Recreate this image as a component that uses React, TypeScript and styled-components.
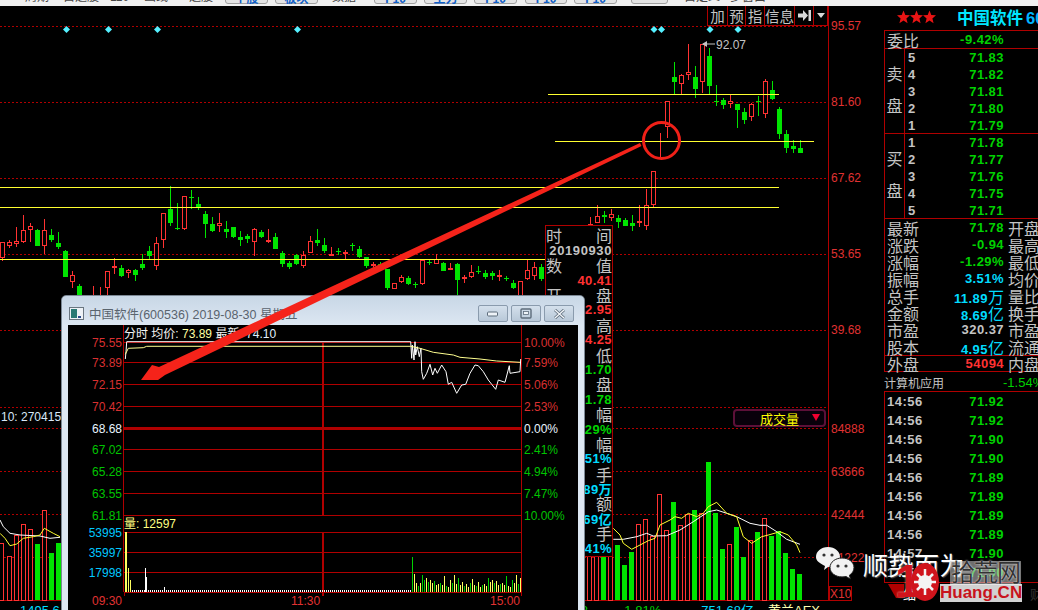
import React from "react";
import styled, { createGlobalStyle } from "styled-components";

const GlobalStyle = createGlobalStyle`
  html, body {
    margin: 0;
    padding: 0;
    background: #000;
    overflow: hidden;
  }
`;

const CJK = `"Liberation Sans", "Noto Sans CJK SC", sans-serif`;
const RED = "#e03232";
const LINE = "#b00000";
const GREEN = "#00d200";
const CYAN = "#00dcff";
const GREY = "#c4c4c4";

const Page = styled.div`
  position: relative;
  width: 1038px;
  height: 610px;
  overflow: hidden;
  display: flex;
  flex-direction: column;
  background: #000;
  font-family: ${CJK};
`;

const TopBar = styled.div`
  height: 6px;
  padding-bottom: 2px;
  box-sizing: border-box;
  flex: none;
  display: flex;
  align-items: flex-end;
  overflow: hidden;
  background: #f0f0f0;
`;

const ToolText = styled.span<{ $left: number; $w: number }>`
  flex: none;
  width: ${(p) => p.$w}px;
  margin-left: ${(p) => p.$left}px;
  font-size: 12px;
  line-height: 14px;
  color: #444;
  white-space: nowrap;
`;

const ToolButton = styled.span<{ $left: number; $w: number }>`
  flex: none;
  box-sizing: border-box;
  width: ${(p) => p.$w}px;
  height: 18px;
  margin-left: ${(p) => p.$left}px;
  border: 1px solid #a0a0a0;
  border-radius: 3px;
  background: #e4e4e4;
  color: #1060c8;
  font-size: 12px;
  font-weight: bold;
  line-height: 24px;
  text-align: center;
`;

const Workspace = styled.div`
  flex: 1;
  min-height: 0;
  display: flex;
`;

const ChartColumn = styled.div`
  flex: none;
  width: 884px;
  display: flex;
  flex-direction: column;
`;

const ChartPane = styled.div`
  position: relative;
  height: 595px;
  flex: none;
`;

const ChartSvg = styled.svg`
  display: block;
  width: 100%;
  height: 100%;
`;

const AxisText = styled.text<{ $fill: string; $bold?: boolean }>`
  font-family: ${CJK};
  font-size: 12px;
  font-weight: ${(p) => (p.$bold ? "bold" : "normal")};
  fill: ${(p) => p.$fill};
`;

const ActionBar = styled.div`
  position: absolute;
  top: 0;
  left: 707px;
  height: 19px;
  display: flex;
  border-bottom: 1px solid ${LINE};
  background: #000;
`;

const ActionCell = styled.div<{ $w: number }>`
  box-sizing: border-box;
  width: ${(p) => p.$w}px;
  display: flex;
  align-items: center;
  justify-content: center;
  border-left: 1px solid ${LINE};
  color: ${GREY};
  font-size: 14.5px;
  white-space: nowrap;
  &:last-child {
    border-right: 1px solid ${LINE};
  }
`;

const VolumeSelect = styled.div`
  position: absolute;
  left: 733px;
  top: 403px;
  box-sizing: border-box;
  width: 93px;
  height: 18px;
  display: flex;
  align-items: center;
  justify-content: center;
  border: 2px solid #5c1038;
  border-radius: 4px;
  background: #08000a;
  color: #ffff00;
  font-size: 13px;
  &::after {
    content: "";
    position: absolute;
    right: 4px;
    top: 3px;
    border-left: 4px solid transparent;
    border-right: 4px solid transparent;
    border-top: 7px solid #f00030;
  }
`;

const MultipleBox = styled.div`
  position: absolute;
  left: 829px;
  top: 580px;
  box-sizing: border-box;
  width: 23px;
  height: 15px;
  border: 1px solid ${LINE};
  color: ${RED};
  font-size: 12px;
  line-height: 14px;
  text-align: center;
`;

const StatusStrip = styled.div`
  flex: 1;
  display: flex;
  overflow: hidden;
  font-size: 13px;
  line-height: 16px;
  padding-top: 2px;
`;

const StatusText = styled.span<{ $left: number; $color: string }>`
  flex: none;
  margin-left: ${(p) => p.$left}px;
  color: ${(p) => p.$color};
  white-space: nowrap;
`;

/* data card opened on the candle chart, sits under the small window */
const DataCard = styled.div`
  position: absolute;
  left: 545px;
  top: 225px;
  box-sizing: border-box;
  width: 68px;
  height: 332px;
  padding-top: 2px;
  display: flex;
  flex-direction: column;
  border: 1px solid ${LINE};
  background: #000;
  overflow: hidden;
`;

const CardRow = styled.div<{ $color?: string; $split?: boolean; $wide?: boolean }>`
  height: 14.9px;
  flex: none;
  display: flex;
  align-items: center;
  justify-content: ${(p) => (p.$split ? "space-between" : "flex-end")};
  color: ${(p) => p.$color || GREY};
  font-size: ${(p) => (p.$split ? 16 : 13)}px;
  font-weight: ${(p) => (p.$split ? "normal" : "bold")};
  letter-spacing: ${(p) => (p.$split ? 0 : p.$wide ? 0.6 : 0.4)}px;
  white-space: nowrap;
`;

const SidePanel = styled.div`
  flex: none;
  width: 154px;
  display: flex;
  flex-direction: column;
  overflow: hidden;
`;

const SideHeader = styled.div`
  height: 24px;
  flex: none;
  box-sizing: border-box;
  display: flex;
  align-items: center;
  padding: 0 0 2px 13px;
  white-space: nowrap;
`;

const Stars = styled.div`
  display: flex;
  width: 60px;
  flex: none;
`;

const StockName = styled.span`
  color: #00e6ff;
  font-size: 16.5px;
  font-weight: bold;
  em {
    font-style: normal;
    color: #00b4ff;
    margin-left: 3px;
  }
`;

const Book = styled.div`
  flex: none;
  border-top: 1px solid ${LINE};
  border-left: 1px solid ${LINE};
`;

const Row = styled.div<{ $h?: number; $boxed?: boolean }>`
  height: ${(p) => p.$h || 17}px;
  box-sizing: border-box;
  flex: none;
  display: flex;
  align-items: center;
  white-space: nowrap;
  border-top: ${(p) => (p.$boxed ? `1px solid ${LINE}` : "none")};
  border-bottom: ${(p) => (p.$boxed ? `1px solid ${LINE}` : "none")};
`;

const RatioRow = styled(Row)`
  border-bottom: 1px solid ${LINE};
`;

const RowLabel = styled.span`
  flex: none;
  box-sizing: border-box;
  width: 36px;
  padding-left: 2px;
  color: ${GREY};
  font-size: 16px;
`;

const RowValue = styled.span<{ $color: string; $w?: number }>`
  flex: none;
  width: ${(p) => p.$w || 83}px;
  text-align: right;
  color: ${(p) => p.$color};
  font-size: 13px;
  font-weight: bold;
  letter-spacing: 0.45px;
  small {
    font-size: 16px;
    font-weight: normal;
    letter-spacing: 0;
    color: ${(p) => p.$color};
  }
`;

const RowExtra = styled.span`
  flex: none;
  margin-left: 4px;
  color: ${GREY};
  font-size: 16px;
`;

const BookSide = styled.div`
  height: 85px;
  box-sizing: border-box;
  display: flex;
  border-bottom: 1px solid ${LINE};
`;

const BookTitle = styled.div`
  flex: none;
  box-sizing: border-box;
  width: 20px;
  padding-top: 18px;
  display: flex;
  flex-direction: column;
  gap: 16px;
  align-items: center;
  border-right: 1px solid ${LINE};
  color: ${GREY};
  font-size: 16px;
  line-height: 16px;
`;

const BookRows = styled.div`
  flex: 1;
`;

const LevelNo = styled.span`
  flex: none;
  box-sizing: border-box;
  width: 16px;
  padding-left: 3px;
  color: ${GREY};
  font-size: 13px;
  font-weight: bold;
`;

const Quotes = styled.div`
  flex: none;
  border-left: 1px solid ${LINE};
`;

const SectorRow = styled.div`
  height: 19px;
  flex: none;
  display: flex;
  align-items: center;
  padding-top: 1px;
  box-sizing: border-box;
  color: ${GREY};
  font-size: 12px;
  white-space: nowrap;
  span {
    width: 119px;
    flex: none;
  }
  b {
    font-weight: normal;
    font-size: 13px;
    color: ${GREEN};
  }
`;

const Ticks = styled.div`
  height: 192px;
  flex: none;
  box-sizing: border-box;
  margin-right: -4px;
  border: 1px solid ${LINE};
  overflow: hidden;
`;

const TickRow = styled.div`
  height: 19px;
  display: flex;
  align-items: center;
`;

const TickTime = styled.span`
  flex: none;
  box-sizing: border-box;
  width: 36px;
  padding-left: 2px;
  color: ${GREY};
  font-size: 13px;
  font-weight: bold;
  letter-spacing: 0.5px;
`;

const Tabs = styled.div`
  flex: 1;
  display: flex;
  align-items: flex-start;
  padding: 1px 0 0 4px;
  font-size: 13px;
`;

const TabMark = styled.div`
  flex: none;
  width: 16px;
  height: 14px;
  background: ${LINE};
  clip-path: polygon(0 0, 100% 0, 100% 100%, 50% 100%);
`;

const TabLabel = styled.span<{ $left: number; $color: string }>`
  flex: none;
  margin-left: ${(p) => p.$left}px;
  color: ${(p) => p.$color};
`;

/* floating day window */
const DayWindow = styled.div`
  position: absolute;
  left: 61px;
  top: 295px;
  box-sizing: border-box;
  width: 524px;
  height: 330px;
  padding: 0 6px 0 6px;
  display: flex;
  flex-direction: column;
  border: 1px solid #7c8894;
  border-radius: 5px 5px 0 0;
  background: linear-gradient(#c8d7e6, #dde7f2 30px);
`;

const WindowTitle = styled.div`
  height: 29px;
  flex: none;
  box-sizing: border-box;
  display: flex;
  align-items: center;
  gap: 5px;
  padding: 6px 4px 0 1px;
  color: #5a646e;
  font-size: 12.5px;
`;

const TitleText = styled.span`
  flex: 1;
  white-space: nowrap;
`;

const WindowButtons = styled.div`
  display: flex;
  gap: 3px;
`;

const WindowButton = styled.div`
  box-sizing: border-box;
  width: 30px;
  height: 17px;
  display: flex;
  align-items: center;
  justify-content: center;
  border: 1px solid #8a9bad;
  border-radius: 2px;
  background: linear-gradient(#d4e0ec, #b8c8d8);
`;

const DayChart = styled.svg`
  display: block;
  flex: none;
  width: 510px;
  height: 285px;
  background: #000;
`;

const Watermark = styled.div`
  position: absolute;
  left: 816px;
  top: 540px;
  width: 222px;
  height: 70px;
  pointer-events: none;
`;

const WaterTitle = styled.span`
  position: absolute;
  left: 47px;
  top: 6px;
  color: #fff;
  font-size: 25px;
  letter-spacing: 0.5px;
  white-space: nowrap;
  text-shadow: 1px 1px 1px #555;
`;

const WaterSite = styled.span`
  position: absolute;
  left: 134px;
  top: 21px;
  padding: 0 1px;
  background: rgba(200, 200, 200, 0.55);
  color: #333;
  font-size: 24px;
  line-height: 24px;
  letter-spacing: -1px;
  white-space: nowrap;
  text-shadow: 0 0 2px #fff;
`;

const WaterLogo = styled.svg`
  position: absolute;
  left: 94px;
  top: 22px;
`;

const WaterNumber = styled.span`
  position: absolute;
  left: 79px;
  top: 14px;
  color: #d0141c;
  font-size: 46px;
  font-weight: bold;
  line-height: 54px;
  text-shadow: 0 0 2px rgba(255, 255, 255, 0.7);
`;

const WaterDomain = styled.span`
  position: absolute;
  left: 124px;
  top: 44px;
  background: rgba(255, 255, 255, 0.82);
  color: #c8141c;
  font-size: 17px;
  font-weight: bold;
  line-height: 18px;
  white-space: nowrap;
`;

const Overlay = styled.svg`
  position: absolute;
  left: 0;
  top: 0;
  pointer-events: none;
`;

// [x, wickTop, bodyTop, bodyBottom, wickBottom, green?] read at 3x
type Candle = [number, number, number, number, number, number];
const candles: Candle[] = [
  [7, 725, 727, 773, 782, 0], [28, 720, 727, 737, 743, 0], [49, 682, 724, 730, 740, 0],
  [70, 645, 691, 725, 729, 0], [91, 670, 679, 688, 725, 0], [112, 688, 690, 737, 737, 1],
  [133, 658, 691, 736, 762, 0], [154, 687, 706, 720, 726, 1], [175, 697, 730, 741, 747, 1],
  [196, 750, 753, 830, 832, 1], [217, 813, 826, 844, 863, 0], [238, 853, 858, 895, 900, 1],
  [280, 858, 890, 900, 900, 0], [301, 860, 890, 900, 900, 0], [322, 814, 814, 862, 900, 0],
  [343, 775, 799, 803, 822, 0], [364, 796, 804, 828, 832, 1], [385, 806, 812, 818, 834, 0],
  [406, 808, 811, 824, 843, 1], [427, 762, 793, 805, 810, 1], [448, 739, 754, 767, 778, 1],
  [469, 712, 730, 796, 810, 0], [490, 640, 641, 718, 743, 0], [511, 558, 628, 668, 678, 1],
  [532, 609, 685, 688, 690, 1], [553, 589, 589, 686, 689, 0], [574, 570, 591, 594, 627, 1],
  [595, 591, 612, 624, 630, 1], [616, 633, 643, 671, 714, 1], [637, 652, 672, 693, 697, 1],
  [658, 640, 671, 675, 696, 0], [679, 663, 688, 695, 714, 1], [700, 680, 681, 711, 714, 1],
  [721, 694, 712, 720, 738, 1], [742, 702, 708, 717, 728, 1], [763, 685, 688, 725, 767, 0],
  [784, 690, 697, 710, 714, 1], [805, 687, 721, 725, 730, 0], [826, 700, 712, 746, 748, 1],
  [847, 754, 759, 792, 800, 1], [868, 783, 790, 802, 806, 1], [889, 763, 766, 792, 794, 1],
  [910, 754, 766, 797, 803, 0], [931, 708, 725, 758, 760, 0], [952, 687, 720, 729, 737, 1],
  [973, 714, 736, 752, 760, 1], [994, 741, 764, 767, 767, 0], [1015, 745, 754, 756, 764, 1],
  [1036, 750, 757, 760, 778, 0], [1057, 730, 736, 738, 752, 1], [1078, 739, 747, 770, 775, 1],
  [1099, 771, 772, 798, 803, 1], [1120, 786, 793, 797, 805, 0], [1141, 787, 793, 795, 810, 1],
  [1162, 808, 808, 863, 869, 1], [1183, 850, 851, 865, 865, 0], [1204, 826, 832, 845, 848, 0],
  [1225, 828, 834, 852, 855, 1], [1246, 845, 853, 855, 863, 1], [1267, 780, 781, 851, 855, 0],
  [1288, 780, 786, 790, 795, 1], [1309, 762, 779, 791, 792, 0], [1330, 786, 789, 812, 812, 1],
  [1351, 790, 804, 806, 810, 0], [1372, 790, 792, 840, 900, 1], [1393, 826, 833, 835, 849, 0],
  [1414, 796, 817, 830, 835, 0], [1435, 798, 813, 816, 822, 1], [1456, 810, 818, 830, 836, 1],
  [1477, 812, 818, 827, 840, 1], [1498, 811, 825, 827, 842, 0], [1519, 827, 833, 838, 843, 1],
  [1540, 840, 848, 864, 867, 1], [1561, 843, 845, 890, 900, 0],
  [1582, 780, 811, 835, 840, 0], [1603, 785, 801, 826, 840, 0], [1624, 793, 801, 837, 842, 1],
  [1771, 652, 672, 700, 700, 0], [1792, 616, 649, 668, 668, 0], [1813, 633, 646, 650, 668, 1],
  [1834, 628, 643, 653, 662, 0], [1855, 646, 654, 665, 684, 1], [1876, 655, 660, 677, 678, 1],
  [1897, 645, 670, 677, 692, 1], [1918, 616, 663, 667, 680, 0], [1939, 567, 616, 677, 689, 0],
  [1960, 514, 514, 614, 620, 0], [1981, 400, 437, 437, 475, 0], [2002, 304, 304, 379, 413, 0],
  [2023, 186, 232, 245, 283, 1], [2044, 222, 226, 251, 283, 0], [2065, 132, 217, 223, 240, 0],
  [2086, 198, 232, 266, 294, 1], [2107, 132, 132, 244, 278, 0], [2128, 145, 168, 257, 283, 1],
  [2149, 255, 303, 305, 318, 1], [2170, 295, 300, 315, 327, 1], [2191, 284, 304, 311, 323, 0],
  [2212, 312, 312, 329, 383, 1], [2233, 325, 336, 359, 372, 1], [2254, 310, 313, 349, 362, 0],
  [2275, 288, 303, 305, 347, 1], [2296, 238, 244, 341, 353, 0], [2317, 243, 270, 297, 299, 1],
  [2338, 322, 328, 401, 417, 1], [2359, 390, 403, 443, 458, 1], [2380, 420, 438, 446, 459, 1],
  [2401, 420, 444, 460, 460, 1],
];

// [x, top, green?] volume bars, px
const leftBars: [number, number, number][] = [
  [1, 543, 0], [9, 556, 0], [16, 535, 0], [23, 524, 0], [30, 529, 0], [37, 544, 1], [44, 510, 0], [51, 553, 1], [58, 543, 1],
];
const rightTops: [number, number][] = [
  [470, 0], [470, 0], [470, 1], [425, 0], [435, 1], [495, 1], [455, 1], [373, 0], [358, 0], [410, 0], [283, 0], [391, 0], [306, 1],
  [375, 0], [343, 0], [330, 1], [341, 0], [186, 1], [339, 1], [447, 1], [433, 0], [381, 1], [471, 1], [421, 0], [396, 1], [355, 0],
  [408, 1], [394, 1], [459, 1], [507, 1], [522, 1],
];

const priceGrid = [26, 102, 178, 254, 330, 407, 428, 471, 514, 557];
const axisLabels: [string, number][] = [
  ["95.57", 30], ["81.60", 106], ["67.62", 182], ["53.65", 258], ["39.68", 334],
  ["84888", 433], ["63666", 476], ["42444", 519], ["21222", 562],
];
const diamonds = [66.5, 108.5, 157.5, 297.5, 654, 661.5, 710, 738];
const yellowLines: [number, number, number][] = [
  [0, 779, 187.5], [0, 779, 207.5], [0, 560, 259.5], [548, 779, 94.5], [555, 814, 141.5],
];

const maWhiteLeft = "0,360 10,380 30,400 60,405 120,408 150,415 180,412";
const maYellowLeft = "0,400 15,415 30,437 50,432 70,415 100,410 120,405 133,385 160,400 180,410";
const maWhiteRight =
  "100,418 130,418 170,410 200,400 220,408 260,407 300,390 340,365 385,335 410,330 440,340 470,350 510,370 540,376 560,376 590,395 620,418 660,433";
const maYellowRight =
  "100,385 120,405 130,430 155,448 180,435 205,422 225,415 240,375 270,360 285,350 305,355 325,340 350,350 370,340 385,320 410,307 440,340 470,350 490,410 515,430 545,410 565,405 600,395 625,405 650,435 660,458";

const scaleLine = (pts: string, ox: number, oy: number) =>
  pts
    .split(" ")
    .map((p) => {
      const [x, y] = p.split(",").map(Number);
      return `${(ox + x / 3).toFixed(1)},${(oy + y / 3).toFixed(1)}`;
    })
    .join(" ");

const Candles = () => (
  <g shapeRendering="crispEdges">
    {candles.map(([x3, wt, bt, bb, wb, green]) => {
      const x = Math.round(x3 / 3) + 0.5;
      const color = green ? "#00e400" : "#ff3232";
      const top = bt / 3;
      const h = Math.max(bb / 3 - top, 1);
      return (
        <g key={x3}>
          <line x1={x} x2={x} y1={wt / 3} y2={wb / 3} stroke={color} />
          {bt === bb ? null : green ? (
            <rect x={x - 2.5} y={top} width={5} height={h} fill={color} />
          ) : (
            <rect x={x - 2} y={top} width={4} height={h} fill="#000" stroke={color} />
          )}
        </g>
      );
    })}
  </g>
);

const VolumeBars = () => (
  <g shapeRendering="crispEdges">
    {leftBars.map(([x, top, green]) =>
      green ? (
        <rect key={x} x={x - 2.5} y={top} width={5} height={600 - top} fill="#00e400" />
      ) : (
        <rect key={x} x={x - 2} y={top} width={4} height={600 - top} fill="#000" stroke="#ff3232" />
      )
    )}
    {rightTops.map(([z, green], i) => {
      const x = Math.round(580 + (28 + i * 21) / 3) + 0.5;
      const top = 400 + z / 3;
      return green ? (
        <rect key={i} x={x - 2.5} y={top} width={5} height={600 - top} fill="#00e400" />
      ) : (
        <rect key={i} x={x - 2} y={top} width={4} height={600 - top} fill="#000" stroke="#ff3232" />
      );
    })}
  </g>
);

const MainChart = () => (
  <ChartSvg viewBox="0 6 884 595">
    {priceGrid.map((y) => (
      <line key={y} x1={0} x2={828} y1={y + 0.5} y2={y + 0.5} stroke={LINE} strokeDasharray="1.5 2.5" shapeRendering="crispEdges" />
    ))}
    <line x1={828.5} x2={828.5} y1={6} y2={600} stroke={LINE} shapeRendering="crispEdges" />
    <line x1={0} x2={829} y1={600.5} y2={600.5} stroke={LINE} shapeRendering="crispEdges" />
    {axisLabels.map(([t, y]) => (
      <AxisText key={t} x={831} y={y} $fill={RED}>
        {t}
      </AxisText>
    ))}
    <Candles />
    {yellowLines.map(([a, b, y]) => (
      <line key={`${a}-${y}`} x1={a} x2={b} y1={y} y2={y} stroke="#ffff30" shapeRendering="crispEdges" />
    ))}
    {diamonds.map((x) => (
      <polygon key={x} points={`${x},26 ${x + 3.5},29.5 ${x},33 ${x - 3.5},29.5`} fill="#55f0ff" />
    ))}
    <path d="M703 44h12" stroke="#c4c4c4" />
    <path d="M702 44l5-3v6z" fill="#c4c4c4" />
    <AxisText x={716} y={48.5} $fill={GREY}>
      92.07
    </AxisText>
    <AxisText x={1} y={421} $fill="#d8e8f8">
      10: 2704150
    </AxisText>
    <VolumeBars />
    <polyline points={scaleLine(maWhiteLeft, 0, 400)} fill="none" stroke="#fff" />
    <polyline points={scaleLine(maYellowLeft, 0, 400)} fill="none" stroke="#ffff30" />
    <polyline points={scaleLine(maWhiteRight, 580, 400)} fill="none" stroke="#fff" />
    <polyline points={scaleLine(maYellowRight, 580, 400)} fill="none" stroke="#ffff30" />
  </ChartSvg>
);

const cardRows: { a: string; b?: string; color?: string; wide?: boolean }[] = [
  { a: "时", b: "间" },
  { a: "20190930", color: GREY, wide: true },
  { a: "数", b: "值" },
  { a: "40.41", color: "#ff3232" },
  { a: "开", b: "盘" },
  { a: "42.95", color: "#ff3232" },
  { a: "最", b: "高" },
  { a: "44.25", color: "#ff3232" },
  { a: "最", b: "低" },
  { a: "41.70", color: "#00d200" },
  { a: "收", b: "盘" },
  { a: "41.78", color: "#00d200" },
  { a: "涨", b: "幅" },
  { a: "3.29%", color: "#00d200" },
  { a: "振", b: "幅" },
  { a: "6.51%", color: CYAN },
  { a: "总", b: "手" },
  { a: "23.89万", color: CYAN },
  { a: "金", b: "额" },
  { a: "9.69亿", color: CYAN },
  { a: "换", b: "手" },
  { a: "4.41%", color: CYAN },
];

const sells = [
  ["5", "71.83"], ["4", "71.82"], ["3", "71.81"], ["2", "71.80"], ["1", "71.79"],
];
const buys = [
  ["1", "71.78"], ["2", "71.77"], ["3", "71.76"], ["4", "71.75"], ["5", "71.71"],
];

const infoRows: { label: string; value: string; unit?: string; color: string; extra: string }[] = [
  { label: "最新", value: "71.78", color: GREEN, extra: "开盘" },
  { label: "涨跌", value: "-0.94", color: GREEN, extra: "最高" },
  { label: "涨幅", value: "-1.29%", color: GREEN, extra: "最低" },
  { label: "振幅", value: "3.51%", color: CYAN, extra: "均价" },
  { label: "总手", value: "11.89", unit: "万", color: CYAN, extra: "量比" },
  { label: "金额", value: "8.69", unit: "亿", color: CYAN, extra: "换手" },
  { label: "市盈", value: "320.37", color: GREY, extra: "市盈" },
  { label: "股本", value: "4.95", unit: "亿", color: CYAN, extra: "流通" },
];

const ticks: [string, string][] = [
  ["14:56", "71.92"], ["14:56", "71.92"], ["14:56", "71.90"], ["14:56", "71.90"], ["14:56", "71.89"],
  ["14:56", "71.89"], ["14:56", "71.89"], ["14:56", "71.89"], ["14:57", "71.90"], ["14:57", "71.90"],
];

const Star = () => (
  <svg width="13" height="14" viewBox="0 0 13 14">
    <polygon points="6.5,0.5 8.3,5 13,5.3 9.4,8.4 10.6,13.2 6.5,10.6 2.4,13.2 3.6,8.4 0,5.3 4.7,5" fill="#e81414" />
  </svg>
);

const Side = () => (
  <SidePanel>
    <SideHeader>
      <Stars>
        <Star />
        <Star />
        <Star />
      </Stars>
      <StockName>
        中国软件<em>600536</em>
      </StockName>
    </SideHeader>
    <Book>
      <RatioRow $h={18}>
        <RowLabel>委比</RowLabel>
        <RowValue $color={GREEN}>-9.42%</RowValue>
      </RatioRow>
      <BookSide>
        <BookTitle>
          <span>卖</span>
          <span>盘</span>
        </BookTitle>
        <BookRows>
          {sells.map(([n, p]) => (
            <Row key={n}>
              <LevelNo>{n}</LevelNo>
              <RowValue $color={GREEN} $w={83}>
                {p}
              </RowValue>
            </Row>
          ))}
        </BookRows>
      </BookSide>
      <BookSide>
        <BookTitle>
          <span>买</span>
          <span>盘</span>
        </BookTitle>
        <BookRows>
          {buys.map(([n, p]) => (
            <Row key={n}>
              <LevelNo>{n}</LevelNo>
              <RowValue $color={GREEN} $w={83}>
                {p}
              </RowValue>
            </Row>
          ))}
        </BookRows>
      </BookSide>
    </Book>
    <Quotes>
      {infoRows.map((r) => (
        <Row key={r.label}>
          <RowLabel>{r.label}</RowLabel>
          <RowValue $color={r.color}>
            {r.value}
            {r.unit && <small>{r.unit}</small>}
          </RowValue>
          <RowExtra>{r.extra}</RowExtra>
        </Row>
      ))}
      <Row $boxed>
        <RowLabel>外盘</RowLabel>
        <RowValue $color="#ff3232">54094</RowValue>
        <RowExtra>内盘</RowExtra>
      </Row>
    </Quotes>
    <SectorRow>
      <span>计算机应用</span>
      <b>-1.54%</b>
    </SectorRow>
    <Ticks>
      {ticks.map(([t, p], i) => (
        <TickRow key={i}>
          <TickTime>{t}</TickTime>
          <RowValue $color={GREEN}>{p}</RowValue>
        </TickRow>
      ))}
    </Ticks>
    <Tabs>
      <TabMark />
      <TabLabel $left={-1} $color="#fff">
        细
      </TabLabel>
      <TabLabel $left={114} $color="#333">
        财
      </TabLabel>
    </Tabs>
  </SidePanel>
);

const dayRows = [342, 362, 384, 406, 449, 471, 493, 515];
const dayLeft: [string, number, string][] = [
  ["75.55", 346.5, "#d93030"], ["73.89", 367, "#d93030"], ["72.15", 389, "#d93030"], ["70.42", 411, "#d93030"],
  ["68.68", 433, "#e8f4ff"], ["67.02", 454, "#00c400"], ["65.28", 476, "#00c400"], ["63.55", 498, "#00c400"], ["61.81", 520, "#00c400"],
];
const dayRight: [string, number, string][] = [
  ["10.00%", 346.5, "#d93030"], ["7.59%", 367, "#d93030"], ["5.06%", 389, "#d93030"], ["2.53%", 411, "#d93030"],
  ["0.00%", 433, "#e8f4ff"], ["2.41%", 454, "#00c400"], ["4.94%", 476, "#00c400"], ["7.47%", 498, "#00c400"], ["10.00%", 520, "#00c400"],
];
const dayVolLabels: [string, number][] = [["53995", 537], ["35997", 557], ["17998", 577]];

// white price and yellow average lines, read at 3x from the two crops
const dayPrice5 = "196,192 198,170 200,140";
const dayPrice6 =
  "272,140 275,190 277,150 282,195 285,140 287,180 292,155 298,185 303,160 305,230 310,253 320,235 330,208 338,240 345,220 352,235 365,210 378,230 385,268 395,262 410,295 425,270 437,268 450,235 465,210 475,212 490,230 505,255 515,268 527,283 535,255 555,262 568,212 570,235 600,230 602,192";
const dayAvg5 = "196,178 205,160 250,158 260,154";
const dayAvg6 = "272,154 300,160 340,172 400,180 420,187 480,192 530,198 600,202";

const tail = [14, 10, 12, 9, 11, 7, 8, 9, 7, 16, 6, 5, 12, 9, 17, 8, 14, 7, 10, 6, 8, 5, 9, 13, 7, 6, 10, 5, 7, 8, 6];

const DayVolumes = () => (
  <g shapeRendering="crispEdges">
    {Array.from({ length: 143 }, (_, i) => (
      <rect key={i} x={126 + i * 2} y={590} width={1} height={2} fill="#fff" />
    ))}
    <rect x={125} y={532} width={2} height={60} fill="#ffff60" />
    <rect x={128} y={568} width={1} height={24} fill="#ffff60" />
    <rect x={130} y={580} width={1} height={12} fill="#ffff60" />
    <rect x={145} y={568} width={1} height={24} fill="#fff" />
    <rect x={146} y={577} width={1} height={15} fill="#fff" />
    <rect x={164} y={587} width={1} height={5} fill="#fff" />
    <rect x={412} y={557} width={1} height={35} fill="#00d200" />
    <rect x={414} y={574} width={1} height={18} fill="#ffff60" />
    <rect x={416} y={583} width={1} height={9} fill="#ffff60" />
    <rect x={418} y={586} width={1} height={6} fill="#00d200" />
    <rect x={420} y={583} width={1} height={9} fill="#ffff60" />
    <rect x={422} y={575} width={1} height={17} fill="#00d200" />
    <rect x={424} y={580} width={1} height={12} fill="#00d200" />
    {Array.from({ length: 48 }, (_, i) => {
      const h = tail[i % tail.length];
      return <rect key={i} x={426 + i * 2} y={592 - h} width={1} height={h} fill={i % 3 === 1 ? "#00d200" : "#ffff60"} />;
    })}
    <rect x={520} y={578} width={1} height={14} fill="#ffff60" />
  </g>
);

const DayPanel = () => (
  <DayChart viewBox="68 325 510 285">
    <g stroke={LINE} shapeRendering="crispEdges">
      {dayRows.map((y) => (
        <line key={y} x1={124} x2={521} y1={y + 0.5} y2={y + 0.5} />
      ))}
      <line x1={124} x2={521} y1={428} y2={428} strokeWidth={3} />
      {[532, 552, 572, 592].map((y) => (
        <line key={y} x1={124} x2={521} y1={y + 0.5} y2={y + 0.5} />
      ))}
      <line x1={123.5} x2={123.5} y1={325} y2={592} />
      <line x1={521.5} x2={521.5} y1={325} y2={592} />
      <line x1={322.5} x2={322.5} y1={342} y2={515} strokeWidth={2} />
      <line x1={322.5} x2={322.5} y1={533} y2={596} strokeWidth={2} />
      <line x1={124} x2={124} y1={592} y2={596} />
      <line x1={521} x2={521} y1={592} y2={596} />
    </g>
    {dayLeft.map(([t, y, c]) => (
      <AxisText key={t} x={122} y={y} textAnchor="end" $fill={c}>
        {t}
      </AxisText>
    ))}
    {dayRight.map(([t, y, c]) => (
      <AxisText key={`${t}${c}`} x={524} y={y} $fill={c}>
        {t}
      </AxisText>
    ))}
    {dayVolLabels.map(([t, y]) => (
      <AxisText key={t} x={122} y={y} textAnchor="end" $fill="#00c8ff">
        {t}
      </AxisText>
    ))}
    <AxisText x={122} y={605} textAnchor="end" $fill={RED}>
      09:30
    </AxisText>
    <AxisText x={291} y={605} $fill={RED}>
      11:30
    </AxisText>
    <AxisText x={490} y={605} $fill={RED}>
      15:00
    </AxisText>
    <AxisText x={124} y={338} $fill="#f4f4f4">
      分时 均价:
      <tspan fill="#ffffa0"> 73.89 </tspan>
      最新:
      <tspan fill="#e0f0ff"> 74.10</tspan>
    </AxisText>
    <AxisText x={124} y={528} $fill="#ffff80">
      量: 12597
    </AxisText>
    <polyline
      fill="none"
      stroke="#fff"
      points={`${scaleLine(dayPrice5, 60, 295)} ${scaleLine(dayPrice6, 320, 295)}`}
    />
    <polyline
      fill="none"
      stroke="#ffff90"
      points={`${scaleLine(dayAvg5, 60, 295)} ${scaleLine(dayAvg6, 320, 295)}`}
    />
    <DayVolumes />
  </DayChart>
);

const Window = () => (
  <DayWindow>
    <WindowTitle>
      <svg width="15" height="13" viewBox="0 0 15 13">
        <rect x="0.5" y="0.5" width="14" height="12" fill="#eef2f6" stroke="#6a7680" />
        <rect x="2" y="2" width="6" height="9" fill="#2a7a74" />
        <rect x="9" y="9" width="3" height="2" fill="#2a4a8a" />
      </svg>
      <TitleText>中国软件(600536) 2019-08-30 星期五</TitleText>
      <WindowButtons>
        <WindowButton>
          <svg width="12" height="6" viewBox="0 0 12 6">
            <rect x="0.5" y="1" width="10" height="4" rx="1" fill="#eef3f8" stroke="#5d6c7b" />
          </svg>
        </WindowButton>
        <WindowButton>
          <svg width="12" height="11" viewBox="0 0 12 11">
            <rect x="1" y="1" width="10" height="9" rx="1" fill="none" stroke="#5d6c7b" strokeWidth="1.4" />
            <rect x="3.5" y="3.5" width="5" height="3" fill="#eef3f8" stroke="#5d6c7b" strokeWidth="0.8" />
          </svg>
        </WindowButton>
        <WindowButton>
          <svg width="13" height="10" viewBox="0 0 13 10">
            <path d="M2 1l9 8M11 1l-9 8" stroke="#5d6c7b" strokeWidth="3" />
            <path d="M2 1l9 8M11 1l-9 8" stroke="#f2f6fa" strokeWidth="1.4" />
          </svg>
        </WindowButton>
      </WindowButtons>
    </WindowTitle>
    <DayPanel />
  </DayWindow>
);

const WeChatBubbles = () => (
  <svg width="40" height="40" viewBox="0 0 40 40" style={{ position: "absolute", left: 0, top: 6 }}>
    <path d="M12 1c7 0 12 4.500 12 10 0 5.500-5 10-12 10l-4 3 1-4C4 17.500 0 15 0 11 0 5.500 5 1 12 1z" fill="#f2f2f2" />
    <path d="M26 12c6.600 0 12 4 12 9.500 0 3.200-1.800 6-4.600 7.700l1 3.800-4.400-2.500c-1.300.3-2.600.4-4 .4-6.600 0-12-4-12-9.400S19.400 12 26 12z" fill="#f2f2f2" stroke="#222" strokeWidth="1" />
    <circle cx="8" cy="9" r="1.600" fill="#333" />
    <circle cx="16" cy="9" r="1.600" fill="#333" />
    <circle cx="22" cy="20" r="1.600" fill="#333" />
    <circle cx="30" cy="20" r="1.600" fill="#333" />
  </svg>
);

const WaterMarkBlock = () => (
  <Watermark>
    <WeChatBubbles />
    <WaterTitle>顺势而为</WaterTitle>
    <WaterSite>拾荒网</WaterSite>
    <WaterNumber>1</WaterNumber>
    <WaterLogo width="30" height="40" viewBox="0 0 30 40">
      <ellipse cx="15" cy="20" rx="14" ry="19" fill="#d0141c" />
      <circle cx="15" cy="20" r="7" fill="#f4f4f4" />
      <circle cx="15" cy="20" r="3" fill="#d0141c" />
      <g stroke="#f4f4f4" strokeWidth="2.500">
        <path d="M15 7v26M4 20h22M7 12l16 16M23 12L7 28" />
      </g>
    </WaterLogo>
    <WaterDomain>Huang.CN</WaterDomain>
  </Watermark>
);

const App = () => {
  return (
    <Page>
      <GlobalStyle />
      <TopBar>
        <ToolText $left={25} $w={23}>周期</ToolText>
        <ToolText $left={15} $w={35}>自选股</ToolText>
        <ToolText $left={12} $w={18}>110</ToolText>
        <ToolText $left={16} $w={23}>画线</ToolText>
        <ToolText $left={22} $w={23}>选股</ToolText>
        <ToolButton $left={13} $w={43}>个股</ToolButton>
        <ToolButton $left={7} $w={43}>板块</ToolButton>
        <ToolText $left={14} $w={24}>数据</ToolText>
        <ToolButton $left={18} $w={43}>F10</ToolButton>
        <ToolButton $left={7} $w={43}>主力</ToolButton>
        <ToolButton $left={7} $w={43}>F10</ToolButton>
        <ToolButton $left={8} $w={42}>F10</ToolButton>
        <ToolButton $left={7} $w={43}>F10</ToolButton>
        <ToolButton $left={14} $w={37}> </ToolButton>
        <ToolText $left={16} $w={36}>自定义</ToolText>
        <ToolText $left={10} $w={36}>多窗口</ToolText>
      </TopBar>
      <Workspace>
        <ChartColumn>
          <ChartPane>
            <MainChart />
            <ActionBar>
              <ActionCell $w={20}>加</ActionCell>
              <ActionCell $w={18}>预</ActionCell>
              <ActionCell $w={19}>指</ActionCell>
              <ActionCell $w={30}>信息</ActionCell>
              <ActionCell $w={19}>
                <svg width="13" height="11" viewBox="0 0 13 11">
                  <path d="M0 3.500h5V0l5 5.500-5 5.500V7.500H0z" fill="#d8d8d8" />
                  <rect x="10.500" y="0" width="2.500" height="11" fill="#d8d8d8" />
                </svg>
              </ActionCell>
              <ActionCell $w={15}>
                <svg width="8" height="5" viewBox="0 0 8 5">
                  <path d="M0 0h8L4 5z" fill="#d8d8d8" />
                </svg>
              </ActionCell>
            </ActionBar>
            <VolumeSelect>成交量</VolumeSelect>
            <MultipleBox>X10</MultipleBox>
          </ChartPane>
          <StatusStrip>
            <StatusText $left={20} $color={CYAN}>1495.6</StatusText>
            <StatusText $left={521} $color={GREEN}>8</StatusText>
            <StatusText $left={32} $color={GREEN}>-1.81%</StatusText>
            <StatusText $left={40} $color={CYAN}>751.68亿</StatusText>
            <StatusText $left={14} $color="#ffffb0">黄兰AEX</StatusText>
          </StatusStrip>
        </ChartColumn>
        <Side />
      </Workspace>
      <DataCard>
        {cardRows.map((r, i) => (
          <CardRow key={i} $split={!!r.b} $color={r.color} $wide={r.wide}>
            {r.b ? (
              <>
                <span>{r.a}</span>
                <span>{r.b}</span>
              </>
            ) : (
              r.a
            )}
          </CardRow>
        ))}
      </DataCard>
      <Window />
      <Overlay width="1038" height="610" viewBox="0 0 1038 610">
        <circle cx="661.500" cy="140.500" r="18" fill="none" stroke="#f02018" strokeWidth="3" />
        <polygon points="640,143 641.500,146 165,375 158,380 141,380 152,365 159,367" fill="#f5231a" />
      </Overlay>
      <WaterMarkBlock />
    </Page>
  );
};

export default App;
